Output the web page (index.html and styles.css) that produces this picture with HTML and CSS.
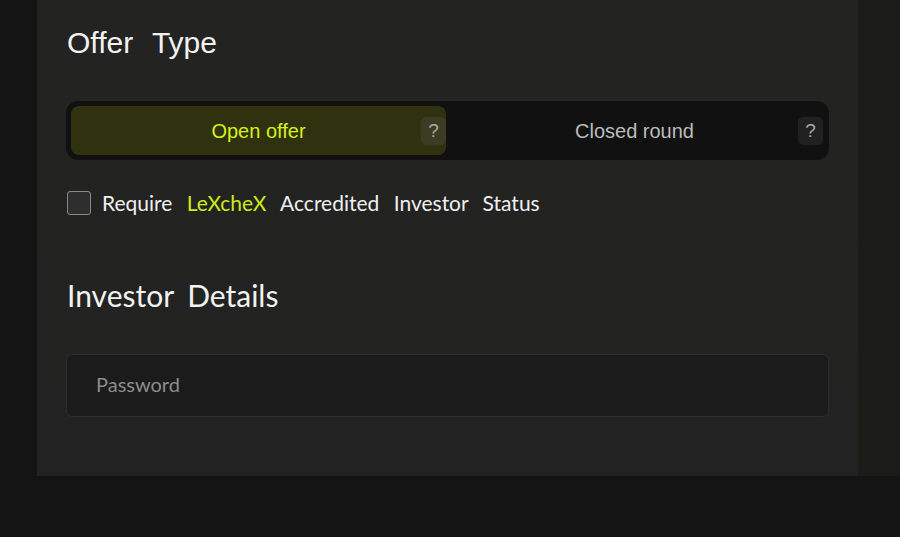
FILE: index.html
```html
<!DOCTYPE html>
<html>
<head>
<meta charset="utf-8">
<link rel="stylesheet" href="styles.css">
</head>
<body>
<div class="page">
  <div class="card">
    <h2 class="title">Offer Type</h2>
    <div class="toggle">
      <div class="tab active">
        <span class="tab-label">Open offer</span>
        <span class="help">?</span>
      </div>
      <div class="tab">
        <span class="tab-label">Closed round</span>
        <span class="help">?</span>
      </div>
    </div>
    <label class="check">
      <span class="box"></span>
      <span class="check-text">Require <span class="brand">LeXcheX</span> Accredited Investor Status</span>
    </label>
    <h2 class="title title-2">Investor Details</h2>
    <div class="input">Password</div>
  </div>
  <div class="side"></div>
</div>
</body>
</html>
```
FILE: styles.css
```css
* { box-sizing: border-box; }
html, body { margin: 0; padding: 0; }
body {
  background: #141414;
  font-family: "Liberation Sans", Arial, sans-serif;
  width: 900px;
  height: 537px;
  overflow: hidden;
}
.page {
  display: flex;
  height: 476px;
  padding-left: 37px;
}
.card {
  width: 821px;
  height: 476px;
  background: linear-gradient(180deg, #232421 0%, #222222 100%);
  padding: 25px 29px 0 30px;
  display: flex;
  flex-direction: column;
}
.side {
  flex: 1;
  background: #1b1c18;
}
.title {
  margin: 0;
  font-weight: 400;
  font-size: 30px;
  line-height: 36px;
  color: #f2f2f2;
  word-spacing: 11px;
}
.toggle {
  margin-top: 40px;
  margin-left: -1px;
  height: 59px;
  background: #111111;
  border-radius: 12px;
  padding: 5px 5px;
  display: flex;
}
.tab {
  flex: 0 0 375px;
  height: 49px;
  border-radius: 8px;
  display: flex;
  align-items: center;
  position: relative;
  justify-content: center;
  padding-top: 2px;
}
.tab + .tab { flex: 0 0 377px; }
.tab.active {
  background: #2f310f;
}
.tab-label {
  font-size: 20px;
  color: #bcbcbc;
}
.tab.active .tab-label { color: #d4f11a; }
.help {
  position: absolute;
  right: 0;
  top: 11px;
  width: 25px;
  height: 28px;
  border-radius: 5px;
  background: #212121;
  color: #a8a8a8;
  font-size: 19px;
  display: flex;
  align-items: center;
  justify-content: center;
}
.tab.active .help { background: #3a3c24; }
.check {
  margin-top: 31px;
  display: flex;
  align-items: center;
  gap: 11px;
  height: 24px;
}
.box {
  width: 24px;
  height: 24px;
  border: 1.5px solid #8a8a8a;
  border-radius: 3px;
  background: #2e2e2e;
}
.check-text {
  font-family: "Lato", sans-serif;
  font-size: 21px;
  color: #efefef;
  word-spacing: 9px;
  margin-top: -1px;
}
.brand { color: #cdea1c; }
.title-2 {
  margin-top: 62px;
  font-family: "Lato", sans-serif;
  font-size: 30px;
  word-spacing: 6px;
}
.input {
  margin-top: 41px;
  margin-left: -1px;
  height: 63px;
  border: 1px solid #2d2d2d;
  border-radius: 6px;
  background: #1b1b1b;
  padding-left: 29px;
  padding-bottom: 3px;
  display: flex;
  align-items: center;
  font-family: "Lato", sans-serif;
  font-size: 20px;
  color: #8c8c8c;
}
```
